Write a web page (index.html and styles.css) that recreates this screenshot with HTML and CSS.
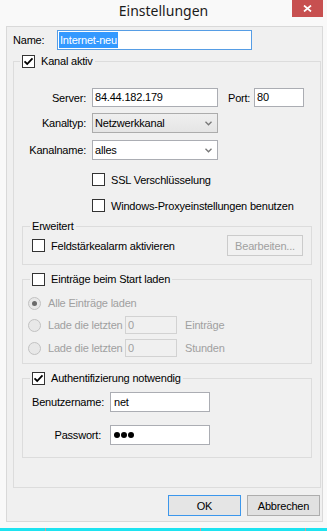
FILE: index.html
```html
<!DOCTYPE html>
<html lang="de">
<head>
    <meta charset="UTF-8">
    <meta name="viewport" content="width=device-width, initial-scale=1.0">
    <title>Einstellungen</title>
    <link rel="stylesheet" href="styles.css">
</head>
<body>

<div class="titlebar">
    <div class="title">Einstellungen</div>
    <div class="close">
        <svg width="9" height="7" viewBox="0 0 9 7"><path d="M1 0.5 L8 6.5 M8 0.5 L1 6.5" stroke="#fff" stroke-width="1.7" fill="none"/></svg>
    </div>
</div>

<div class="dialog">
    <div class="name-row">
        <span class="name-label">Name:</span>
        <div class="textbox focused name-box"><span class="selected">Internet-neu</span></div>
    </div>

    <fieldset class="group outer">
        <legend>
            <span class="check"><svg width="11" height="11" viewBox="0 0 11 11"><path d="M1.5 5.3 L4.2 8 L9.5 2.3" stroke="#000" stroke-width="1.8" fill="none"/></svg></span>
            Kanal aktiv
        </legend>

        <div class="form-row server-row">
            <span class="label">Server:</span>
            <div class="textbox server">84.44.182.179</div>
            <span class="port-label">Port:</span>
            <div class="textbox port">80</div>
        </div>

        <div class="form-row kanaltyp-row">
            <span class="label">Kanaltyp:</span>
            <div class="combo readonly">
                <span>Netzwerkkanal</span>
                <svg width="7" height="5" viewBox="0 0 7 5"><path d="M0.5 0.8 L3.5 3.8 L6.5 0.8" stroke="#777" stroke-width="1.3" fill="none"/></svg>
            </div>
        </div>

        <div class="form-row kanalname-row">
            <span class="label">Kanalname:</span>
            <div class="combo">
                <span>alles</span>
                <svg width="7" height="5" viewBox="0 0 7 5"><path d="M0.5 0.8 L3.5 3.8 L6.5 0.8" stroke="#777" stroke-width="1.3" fill="none"/></svg>
            </div>
        </div>

        <div class="option-row ssl-row">
            <span class="check"></span>
            <span>SSL Verschlüsselung</span>
        </div>
        <div class="option-row proxy-row">
            <span class="check"></span>
            <span>Windows-Proxyeinstellungen benutzen</span>
        </div>

        <fieldset class="group inner erweitert">
            <legend>Erweitert</legend>
            <div class="alarm-row">
                <span class="check"></span>
                <span>Feldstärkealarm aktivieren</span>
                <div class="button disabled">Bearbeiten...</div>
            </div>
        </fieldset>

        <fieldset class="group inner eintraege">
            <legend>
                <span class="check"></span>
                Einträge beim Start laden
            </legend>
            <div class="radio-row first">
                <span class="radio checked"></span>
                <span>Alle Einträge laden</span>
            </div>
            <div class="radio-row second">
                <span class="radio"></span>
                <span class="radio-text">Lade die letzten</span>
                <div class="textbox small disabled-box">0</div>
                <span class="unit">Einträge</span>
            </div>
            <div class="radio-row third">
                <span class="radio"></span>
                <span class="radio-text">Lade die letzten</span>
                <div class="textbox small disabled-box">0</div>
                <span class="unit">Stunden</span>
            </div>
        </fieldset>

        <fieldset class="group inner auth">
            <legend>
                <span class="check"><svg width="11" height="11" viewBox="0 0 11 11"><path d="M1.5 5.3 L4.2 8 L9.5 2.3" stroke="#000" stroke-width="1.8" fill="none"/></svg></span>
                Authentifizierung notwendig
            </legend>
            <div class="login-row user-row">
                <span class="login-label">Benutzername:</span>
                <div class="textbox login">net</div>
            </div>
            <div class="login-row pass-row">
                <span class="login-label">Passwort:</span>
                <div class="textbox login"><span class="dot"></span><span class="dot"></span><span class="dot"></span></div>
            </div>
        </fieldset>
    </fieldset>

    <div class="buttons">
        <div class="button default">OK</div>
        <div class="button">Abbrechen</div>
    </div>
</div>

<div class="taskbar">
    <span class="seg seg1"></span>
    <span class="seg seg2"></span>
    <span class="seg seg3"></span>
    <span class="seg seg4"></span>
</div>

</body>
</html>
```

FILE: styles.css
```css
body {
    margin: 0;
    width: 327px;
    height: 531px;
    overflow: hidden;
    background-color: #f9f9f9;
    font-family: 'Liberation Sans', Arial, sans-serif;
    font-size: 11px;
    letter-spacing: -0.2px;
    color: #000;
}

/* title bar */
.titlebar {
    display: grid;
    grid-template-columns: 1fr auto 1fr;
    height: 26px;
}
.title {
    grid-column: 2;
    font-family: 'Noto Sans', sans-serif;
    font-size: 14px;
    line-height: 20px;
    padding-top: 1px;
    letter-spacing: 0;
    color: #1b1b1b;
}
.close {
    grid-column: 3;
    justify-self: end;
    width: 31px;
    height: 17px;
    margin-right: 4px;
    background-color: #c75050;
    display: flex;
    align-items: center;
    justify-content: center;
}

/* dialog body */
.dialog {
    box-sizing: border-box;
    width: 317px;
    height: 496px;
    margin-left: 6px;
    background-color: #f0f0f0;
    border: 1px solid #d9d9d9;
    padding: 3px 1px 0 6px;
}
.name-row {
    display: flex;
    align-items: center;
    height: 20px;
}
.name-label {
    width: 44px;
}

.textbox {
    box-sizing: border-box;
    height: 19px;
    border: 1px solid #abadb3;
    background-color: #fff;
    padding-left: 2px;
    display: flex;
    align-items: center;
    line-height: 13px;
    white-space: nowrap;
}
.textbox.focused {
    border-color: #569de5;
}
.name-box {
    width: 195px;
    height: 20px;
    padding-left: 1px;
}
.selected {
    background-color: #3399ff;
    color: #fff;
    line-height: 16px;
    padding: 0 1px;
}

.check {
    box-sizing: border-box;
    width: 13px;
    height: 13px;
    flex: none;
    border: 1px solid #333;
    background-color: #fff;
    display: flex;
}

/* group boxes */
.group {
    margin: 0;
    padding: 0;
    min-width: 0;
    border: 1px solid #dcdcdc;
}
.group legend {
    display: flex;
    align-items: center;
    gap: 6px;
    height: 13px;
    line-height: 13px;
    padding: 0 2px;
    margin-left: 6px;
}
.outer {
    margin-top: 5px;
    padding-bottom: 29px;
}
.inner {
    margin: 8px 8px 0;
}
.inner legend {
    margin-left: 7px;
}

.form-row {
    display: flex;
    align-items: center;
}
.label {
    width: 72px;
    margin-right: 6px;
    text-align: right;
}
.server-row {
    margin-top: 20px;
}
.server {
    width: 126px;
}
.port-label {
    width: 26px;
    margin-left: 10px;
}
.port {
    width: 50px;
}
.kanaltyp-row {
    margin-top: 6px;
}
.kanalname-row {
    margin-top: 7px;
}
.combo {
    box-sizing: border-box;
    width: 126px;
    height: 20px;
    border: 1px solid #abadb3;
    background-color: #fff;
    padding: 0 5px 0 2px;
    display: flex;
    align-items: center;
    justify-content: space-between;
}
.combo.readonly {
    border-color: #acacac;
    background: linear-gradient(#efefef, #e5e5e5);
}

.option-row {
    display: flex;
    align-items: center;
    gap: 6px;
    height: 13px;
    padding-left: 78px;
}
.ssl-row {
    margin-top: 13px;
}
.proxy-row {
    margin-top: 13px;
}

.alarm-row {
    display: flex;
    align-items: center;
    gap: 6px;
    height: 21px;
    margin-top: 2px;
    padding-left: 9px;
}
.erweitert {
    padding-bottom: 8px;
}
.alarm-row .button {
    margin-left: auto;
    margin-right: 8px;
}

.button {
    box-sizing: border-box;
    width: 73px;
    height: 21px;
    border: 1px solid #adadad;
    background-color: #e1e1e1;
    display: flex;
    align-items: center;
    justify-content: center;
}
.button.disabled {
    width: 76px;
    color: #a0a0a0;
    border-color: #cbcbcb;
    background-color: #f1f1f1;
}
.button.default {
    border-color: #3c97ec;
    background-color: #e5e5e5;
}

/* entries group */
.eintraege {
    padding-bottom: 6px;
}
.radio-row {
    display: flex;
    align-items: center;
    margin-left: 5px;
    color: #a0a0a0;
}
.radio {
    box-sizing: border-box;
    width: 13px;
    height: 13px;
    margin-right: 7px;
    border: 1px solid #c2c2c2;
    border-radius: 50%;
    background-color: #e8e8e8;
    display: flex;
    align-items: center;
    justify-content: center;
}
.radio.checked::after {
    content: "";
    width: 5px;
    height: 5px;
    border-radius: 50%;
    background-color: #6a6a6a;
}
.radio-row.first {
    margin-top: 10px;
    height: 14px;
}
.radio-row.second {
    margin-top: 6px;
    height: 18px;
}
.radio-row.third {
    margin-top: 5px;
    height: 18px;
}
.radio-text {
    width: 77px;
}
.textbox.small {
    width: 52px;
    height: 18px;
}
.disabled-box {
    border-color: #d2d2d2;
    background-color: #f0f0f0;
    color: #a0a0a0;
}
.unit {
    margin-left: 8px;
}

/* auth group */
.auth {
    padding-bottom: 12px;
}
.login-row {
    display: flex;
    align-items: center;
    height: 20px;
}
.user-row {
    margin-top: 7px;
}
.pass-row {
    margin-top: 13px;
}
.login-label {
    width: 69px;
    margin: 0 9px;
    text-align: right;
    white-space: nowrap;
}
.textbox.login {
    width: 100px;
    height: 20px;
    padding-left: 3px;
}
.dot {
    width: 6px;
    height: 6px;
    margin-right: 1px;
    border-radius: 50%;
    background-color: #000;
}

/* bottom buttons */
.buttons {
    display: flex;
    justify-content: flex-end;
    gap: 6px;
    margin-top: 7px;
    padding-right: 1px;
}

.taskbar {
    display: flex;
    height: 3px;
    margin-top: 6px;
    background-color: #1de3f0;
}
.seg {
    height: 3px;
}
.seg1 {
    width: 45px;
}
.seg2 {
    width: 154px;
    border-left: 1px solid #d29a9a;
}
.seg3 {
    width: 104px;
    border-left: 1px solid #d29a9a;
}
.seg4 {
    flex: 1;
    border-left: 1px solid #d29a9a;
}
```
